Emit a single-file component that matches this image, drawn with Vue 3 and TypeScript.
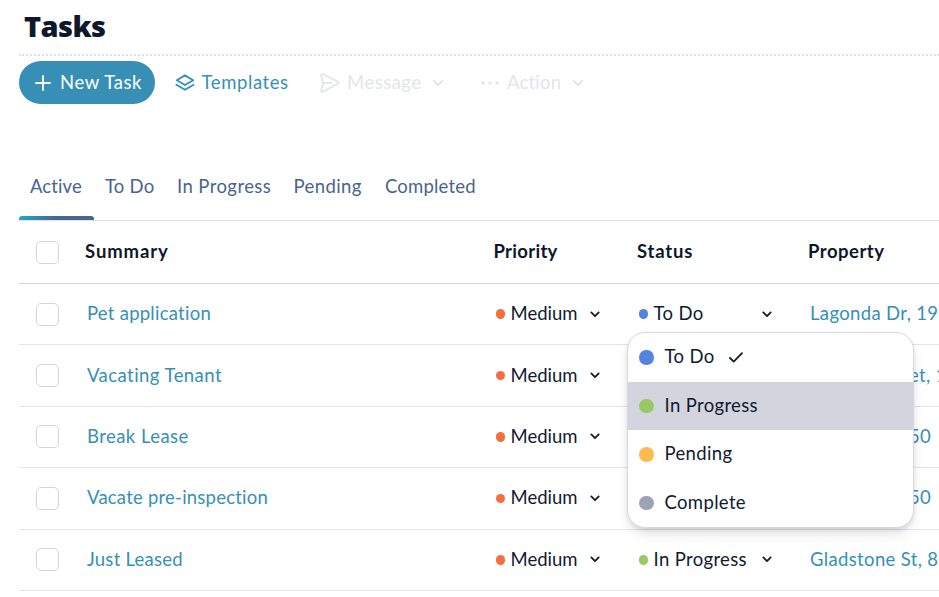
<script setup lang="ts">
import { ref } from 'vue'

interface Task {
  summary: string
  status?: string
  tone?: string
  property: string
  covered?: boolean
  fit: string
}

const tabs = [
  { label: 'Active', fit: 't1' },
  { label: 'To Do', fit: 't2' },
  { label: 'In Progress', fit: 't3' },
  { label: 'Pending', fit: 't4' },
  { label: 'Completed', fit: 't5' },
]
const activeTab = ref('Active')

const tasks: Task[] = [
  { summary: 'Pet application', status: 'To Do', tone: 'blue', property: 'Lagonda Dr, 19', fit: 's1' },
  { summary: 'Vacating Tenant', property: 'et, 1', covered: true, fit: 's2' },
  { summary: 'Break Lease', property: '50', covered: true, fit: 's3' },
  { summary: 'Vacate pre-inspection', property: '50', covered: true, fit: 's4' },
  { summary: 'Just Leased', status: 'In Progress', tone: 'green', property: 'Gladstone St, 8', fit: 's5' },
]

const options = [
  { label: 'To Do', tone: 'blue' },
  { label: 'In Progress', tone: 'green' },
  { label: 'Pending', tone: 'amber' },
  { label: 'Complete', tone: 'grey' },
]
const selected = ref('To Do')
const hovered = ref('In Progress')
</script>

<template>
  <main class="page">
    <h1>Tasks</h1>
    <div class="toolbar">
      <button class="new">
        <svg width="16" height="16" viewBox="0 0 16 16"><path d="M8 1v14M1 8h14" /></svg>
        <span>New Task</span>
      </button>
      <button class="tool templates">
        <svg width="20" height="18" viewBox="0 0 20 18"><path d="M10 1.400 18.200 6.200 10 11 1.800 6.200ZM1.400 10.700 10 15.800l8.600-5.100" /></svg>
        <span>Templates</span>
      </button>
      <button class="tool message" disabled>
        <svg width="20" height="20" viewBox="0 0 20 20"><path d="M3.300 1.400 17.700 8.500Q19.700 9.700 17.700 10.900L3.300 18.500Q.8 19.300 1.300 16.600L3.200 9.900 1.300 3.300Q.8.600 3.300 1.400ZM3.400 9.900H11.500" /></svg>
        <span>Message</span>
        <svg class="caret" width="12" height="8" viewBox="0 0 12 8"><path d="m1.500 1.500 4.500 4.500 4.500-4.500" /></svg>
      </button>
      <button class="tool action" disabled>
        <svg class="dots" width="18" height="4" viewBox="0 0 18 4"><circle cx="2" cy="2" r="1.700" /><circle cx="9" cy="2" r="1.700" /><circle cx="16" cy="2" r="1.700" /></svg>
        <span>Action</span>
        <svg class="caret" width="12" height="8" viewBox="0 0 12 8"><path d="m1.500 1.500 4.500 4.500 4.500-4.500" /></svg>
      </button>
    </div>

    <nav class="tabs">
      <button v-for="t in tabs" :key="t.label" :class="[t.fit, { active: activeTab === t.label }]" @click="activeTab = t.label">
        {{ t.label }}
      </button>
    </nav>

    <section class="table">
      <div class="row head">
        <span class="box"></span>
        <span class="h-sum">Summary</span>
        <span class="h-pri">Priority</span>
        <span class="h-sta">Status</span>
        <span class="h-pro">Property</span>
      </div>
      <div v-for="(task, i) in tasks" :key="task.summary" class="row">
        <span class="box"></span>
        <a class="summary" :class="task.fit">{{ task.summary }}</a>
        <div class="pick priority">
          <i class="dot orange"></i>
          <span>Medium</span>
          <svg width="10" height="7" viewBox="0 0 10 7"><path d="m1.300 1.400 3.700 3.700 3.700-3.700" /></svg>
        </div>
        <div class="pick status">
          <template v-if="task.status">
            <i class="dot" :class="task.tone"></i>
            <span>{{ task.status }}</span>
            <svg width="10" height="7" viewBox="0 0 10 7"><path d="m1.300 1.400 3.700 3.700 3.700-3.700" /></svg>
          </template>
          <div v-if="i === 0" class="menu">
            <div v-for="o in options" :key="o.label" class="option" :class="{ hover: hovered === o.label }" @mouseenter="hovered = o.label" @click="selected = o.label">
              <i class="dot big" :class="o.tone"></i>
              <span>{{ o.label }}</span>
              <svg v-if="selected === o.label" width="14" height="11" viewBox="0 0 14 11"><path d="m1 6 3.700 3.600L13 1.200" /></svg>
            </div>
          </div>
        </div>
        <a class="property" :class="{ covered: task.covered }">{{ task.property }}</a>
      </div>
    </section>
  </main>
</template>

<style>
body {
  background: #fff;
  overflow: hidden;
}
</style>

<style scoped>
.page {
  box-sizing: border-box;
  width: 939px;
  height: 597px;
  padding-left: 18.500px;
  overflow: hidden;
  color: #111a2e;
  font: 18.5px/24px Lato, 'Noto Sans', sans-serif;
  font-variant-ligatures: none;
}
h1 {
  box-sizing: border-box;
  height: 56px;
  margin: 0;
  padding: 5px 0 0 5.500px;
  border-bottom: 2px dotted #e0ddf4;
  color: #0f172a;
  font-family: 'Open Sans', sans-serif;
  font-size: 29px;
  font-weight: 800;
  line-height: 41px;
  letter-spacing: -0.6px;
}
button {
  padding: 0;
  border: 0;
  background: none;
  color: inherit;
  font: inherit;
  letter-spacing: inherit;
  white-space: nowrap;
}
svg {
  flex: none;
  fill: none;
  stroke: currentColor;
  stroke-width: 1.8;
  stroke-linecap: round;
  stroke-linejoin: round;
}
.toolbar {
  display: flex;
  align-items: center;
  height: 43px;
  margin-top: 5px;
}
.toolbar span {
  padding-bottom: 1px;
}
.new {
  display: flex;
  align-items: center;
  box-sizing: border-box;
  gap: 9.500px;
  width: 136px;
  height: 43px;
  padding-left: 16px;
  border-radius: 22px;
  background: #378fb5;
  color: #fff;
  letter-spacing: 0.6px;
}
.tool {
  display: flex;
  align-items: center;
}
.templates {
  width: 145px;
  padding-left: 20px;
  gap: 7px;
  color: #378fb5;
  letter-spacing: 0.6px;
}
.message {
  width: 161px;
  padding-left: 20.500px;
  gap: 7px;
  letter-spacing: 0.5px;
}
.action {
  padding-left: 20.500px;
  gap: 8px;
  letter-spacing: 0.2px;
}
.tool:disabled {
  color: #e3e5ea;
}
.message span {
  width: 78px;
  text-align: left;
}
.action span {
  width: 57px;
  text-align: left;
}
.dots {
  fill: currentColor;
  stroke: none;
}
.tabs {
  display: flex;
  box-sizing: border-box;
  height: 117px;
  padding-top: 49px;
  border-bottom: 1px solid #dfe1ea;
  color: #48648f;
}
.tabs button {
  position: relative;
  height: 67px;
  padding: 0 0 1px 11.500px;
  text-align: left;
}
.tabs .t1 { width: 75px; letter-spacing: 0.1px; }
.tabs .t2 { width: 72px; letter-spacing: 0.2px; }
.tabs .t3 { width: 116.500px; letter-spacing: 0.42px; }
.tabs .t4 { width: 91.500px; letter-spacing: 0.4px; }
.tabs .t5 { letter-spacing: 0.2px; }
.tabs .active::after {
  content: '';
  position: absolute;
  inset: auto 0 0 0;
  height: 4.500px;
  border-radius: 3px 3px 0 0;
  background: linear-gradient(90deg, #1ba9d1, #4a638f 50%);
}
.row {
  display: grid;
  grid-template-columns: 66.500px 408.500px 143.500px 171px 1fr;
  align-items: center;
  box-sizing: border-box;
  height: 61.400px;
  border-bottom: 1px solid #e2e3ec;
}
.head {
  height: 63px;
  border-color: #cdd1e8;
  color: #0f172a;
  font-weight: 700;
}
.head span:not(.box) {
  padding-bottom: 2px;
}
.h-sum { letter-spacing: 0.9px; }
.h-pri { letter-spacing: 0.3px; }
.h-sta { letter-spacing: 0.8px; }
.h-pro { letter-spacing: 0.5px; }
.box {
  box-sizing: border-box;
  width: 23px;
  height: 23px;
  margin-left: 17px;
  border: 1.500px solid #d2d5dc;
  border-radius: 5px;
}
a {
  color: #378fb5;
  white-space: nowrap;
}
.summary,
.property {
  padding: 0 0 2px 2px;
}
.s1 { letter-spacing: 0.25px; }
.s2 { letter-spacing: 0.45px; }
.s3 { letter-spacing: 0.45px; }
.s4 { letter-spacing: 0.22px; }
.s5 { letter-spacing: 0.25px; }
.property {
  letter-spacing: 0.35px;
}
.covered {
  padding-left: 101px;
}
.pick {
  position: relative;
  display: flex;
  align-items: center;
  align-self: stretch;
  padding-left: 2px;
}
.pick > span {
  margin-left: 5.500px;
  padding-bottom: 2px;
}
.priority > span {
  width: 79.500px;
}
.status > span {
  width: 108px;
  letter-spacing: 0.35px;
}
.dot {
  flex: none;
  width: 9.500px;
  height: 9.500px;
  border-radius: 50%;
}
.status > .dot {
  margin-left: -0.500px;
}
.big {
  width: 14.500px;
  height: 14.500px;
}
.orange { background: #f26f3f; }
.blue { background: #5482df; }
.green { background: #98c962; }
.amber { background: #ffbb50; }
.grey { background: #9ca3b2; }
.menu {
  position: absolute;
  z-index: 2;
  top: 48px;
  left: -10px;
  box-sizing: border-box;
  width: 287px;
  height: 196px;
  overflow: hidden;
  border: 1px solid #d9dade;
  border-radius: 18px;
  background: #fff;
  box-shadow: 0 8px 14px -3px #0000001f, 0 2px 4px #00000018;
}
.option {
  display: flex;
  align-items: center;
  height: 48.500px;
  padding-left: 11px;
  letter-spacing: 0.35px;
}
.option span {
  margin: 0 14px 0 11px;
  padding-bottom: 2px;
}
.hover {
  background: #d2d5dd;
}
</style>
